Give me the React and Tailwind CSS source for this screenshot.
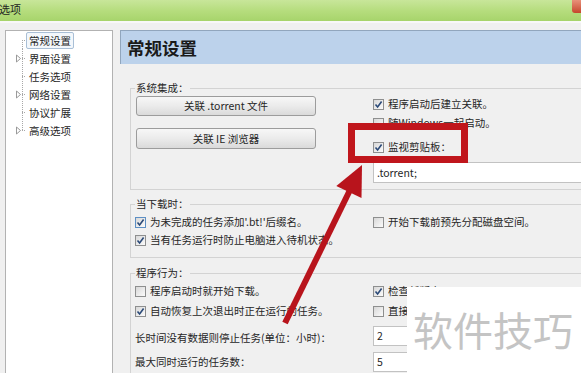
import React from "react";

const FONT = "font-['Noto_Sans_CJK_SC','Noto_Sans',sans-serif]";

// small win7 style checkbox
function Check({ checked, label, focus }) {
  return (
    <div className="flex items-center h-[16px] whitespace-nowrap">
      <span
        className={`flex items-center justify-center w-[11px] h-[11px] mr-[4px] shrink-0 border bg-linear-to-br from-[#d8d8d8] to-[#fbfbfb] ${
          focus ? "border-[#5d8fc4]" : "border-[#8e8f8f]"
        }`}
      >
        {checked && (
          <svg width="9" height="9" viewBox="0 0 9 9">
            <path d="M1.5 4.5 L3.6 7 L7.6 1.6" fill="none" stroke="#2b4a78" strokeWidth="1.6" />
          </svg>
        )}
      </span>
      <span>{label}</span>
    </div>
  );
}

function Btn({ children, className = "" }) {
  return (
    <div
      className={`w-[180px] flex items-center justify-center rounded-[3px] border border-[#9c9c9c] bg-linear-to-b from-[#f7f7f7] via-[#ebebeb] to-[#dadada] ${className}`}
    >
      {children}
    </div>
  );
}

const treeItems = [
  { label: "常规设置", expand: false, selected: true },
  { label: "界面设置", expand: true },
  { label: "任务选项", expand: false },
  { label: "网络设置", expand: true },
  { label: "协议扩展", expand: false },
  { label: "高级选项", expand: true },
];

function TreeRow({ item, first, last }) {
  return (
    <div className="flex items-center h-[18px]">
      <svg width="20" height="18" viewBox="0 0 20 18" className="shrink-0">
        <line
          x1="16.5"
          y1={first ? 9 : 0}
          x2="16.5"
          y2={last ? 9 : 18}
          stroke="#a8a8a8"
          strokeDasharray="1 1"
        />
        <line x1="16" y1="9.5" x2="20" y2="9.5" stroke="#a8a8a8" strokeDasharray="1 1" />
        {item.expand && <path d="M10.5 6 L14.5 9.5 L10.5 13 Z" fill="#fff" stroke="#9a9a9a" />}
      </svg>
      <span
        className={`px-[2px] leading-[15px] border ${
          item.selected ? "border-[#a9bfd6] bg-[#f3f7fb] rounded-[2px]" : "border-transparent"
        }`}
      >
        {item.label}
      </span>
    </div>
  );
}

export default function App() {
  return (
    <div className={`relative w-[581px] h-[373px] overflow-hidden bg-[#f0f0f0] text-[10.5px] text-[#262626] ${FONT}`}>
      {/* Title bar */}
      <div className="h-[21px] flex items-start justify-between bg-linear-to-b from-[#c8e69a] via-[#b6dd7e] to-[#a7d46b]">
        <span className="ml-[-1px] mt-[3px] text-[11px] leading-[13px] text-[#1e1e1e]">选项</span>
        <span className="w-[9px] h-[13px] rounded-bl-[3px] bg-linear-to-b from-[#e8907a] to-[#c5452b]" />
      </div>
      <div className="h-[2px] bg-[#f8f8f8]" />

      {/* Body */}
      <div className="flex pt-[7px]">
        {/* Tree */}
        <div className="ml-[5px] w-[108px] h-[360px] shrink-0 bg-white border border-[#b2b2b2]">
          {treeItems.map((it, i) => (
            <TreeRow key={it.label} item={it} first={i === 0} last={i === treeItems.length - 1} />
          ))}
        </div>

        {/* Right panel */}
        <div className="ml-[7px] w-[520px] shrink-0">
          <div className="h-[34px] flex items-center pl-[6px] border-t border-l border-[#91a6bd] bg-[#bcd2eb]">
            <span className="text-[17.5px] font-bold text-[#1a1a1a] leading-[20px]">常规设置</span>
          </div>

          <div className="pl-[10px]">
            {/* 系统集成 */}
            <fieldset className="mt-[16px] border border-[#d3d3d3] pb-[6px]">
              <legend className="ml-[4px] px-[1px] leading-[16px]">系统集成：</legend>
              <div className="grid grid-cols-[237px_1fr] pl-[5px]">
                <div className="flex flex-col">
                  <Btn className="h-[20px]">关联 .torrent 文件</Btn>
                  <Btn className="h-[21px] mt-[12px]">关联 IE 浏览器</Btn>
                </div>
                <div className="flex flex-col">
                  <Check checked label="程序启动后建立关联。" />
                  <div className="mt-[3px]">
                    <Check label="随Windows一起启动。" />
                  </div>
                  <div className="mt-[8px]">
                    <Check checked label="监视剪贴板：" />
                  </div>
                  <div className="mt-[7px] h-[21px] w-[260px] flex items-center pl-[3px] bg-white border border-[#c2c2c2]">
                    .torrent;
                  </div>
                </div>
              </div>
            </fieldset>

            {/* 当下载时 */}
            <fieldset className="mt-[6px] border border-[#d3d3d3] pb-[9px]">
              <legend className="ml-[4px] px-[1px] leading-[16px]">当下载时：</legend>
              <div className="grid grid-cols-[238px_1fr] pl-[4px] mt-[2px]">
                <div className="flex flex-col gap-[2px]">
                  <Check checked focus label="为未完成的任务添加'.bt!'后缀名。" />
                  <Check checked label="当有任务运行时防止电脑进入待机状态。" />
                </div>
                <div className="flex flex-col">
                  <Check label="开始下载前预先分配磁盘空间。" />
                </div>
              </div>
            </fieldset>

            {/* 程序行为 */}
            <fieldset className="mt-[7px] border border-[#d3d3d3] pb-[20px]">
              <legend className="ml-[4px] px-[1px] leading-[16px]">程序行为：</legend>
              <div className="pl-[4px] mt-[2px] flex flex-col">
                <div className="grid grid-cols-[238px_1fr]">
                  <Check label="程序启动时就开始下载。" />
                  <Check checked label="检查新版本。" />
                </div>
                <div className="grid grid-cols-[238px_1fr] mt-[4px]">
                  <Check checked label="自动恢复上次退出时正在运行的任务。" />
                  <Check label="直接下载新版本。" />
                </div>
                <div className="grid grid-cols-[238px_1fr] mt-[7px] items-center">
                  <span className="mt-[3px]">长时间没有数据则停止任务(单位：小时)：</span>
                  <div className="h-[20px] w-[120px] flex items-center pl-[3px] bg-white border border-[#c2c2c2]">2</div>
                </div>
                <div className="grid grid-cols-[238px_1fr] mt-[6px] items-center">
                  <span>最大同时运行的任务数：</span>
                  <div className="h-[20px] w-[120px] flex items-center pl-[3px] bg-white border border-[#c2c2c2]">5</div>
                </div>
              </div>
            </fieldset>
          </div>
        </div>
      </div>

      {/* Annotation: red highlight box */}
      <div className="absolute left-[348px] top-[123px] w-[120px] h-[40px] border-[7px] border-[#c0161c]" />

      {/* Annotation: red arrow */}
      <svg className="absolute left-0 top-0" width="581" height="373" viewBox="0 0 581 373">
        <line x1="285" y1="323" x2="350" y2="190" stroke="#b8141c" strokeWidth="6" />
        <path d="M362 165 L361.5 198 L336.3 185.9 Z" fill="#b8141c" />
      </svg>

      {/* Watermark */}
      <div className="absolute left-[407px] top-[287px] right-0 bottom-0 bg-white pl-[6px] pt-[22px]">
        <span className="text-[40px] leading-[40px] text-[#c4c4c4]">软件技巧</span>
      </div>
    </div>
  );
}
